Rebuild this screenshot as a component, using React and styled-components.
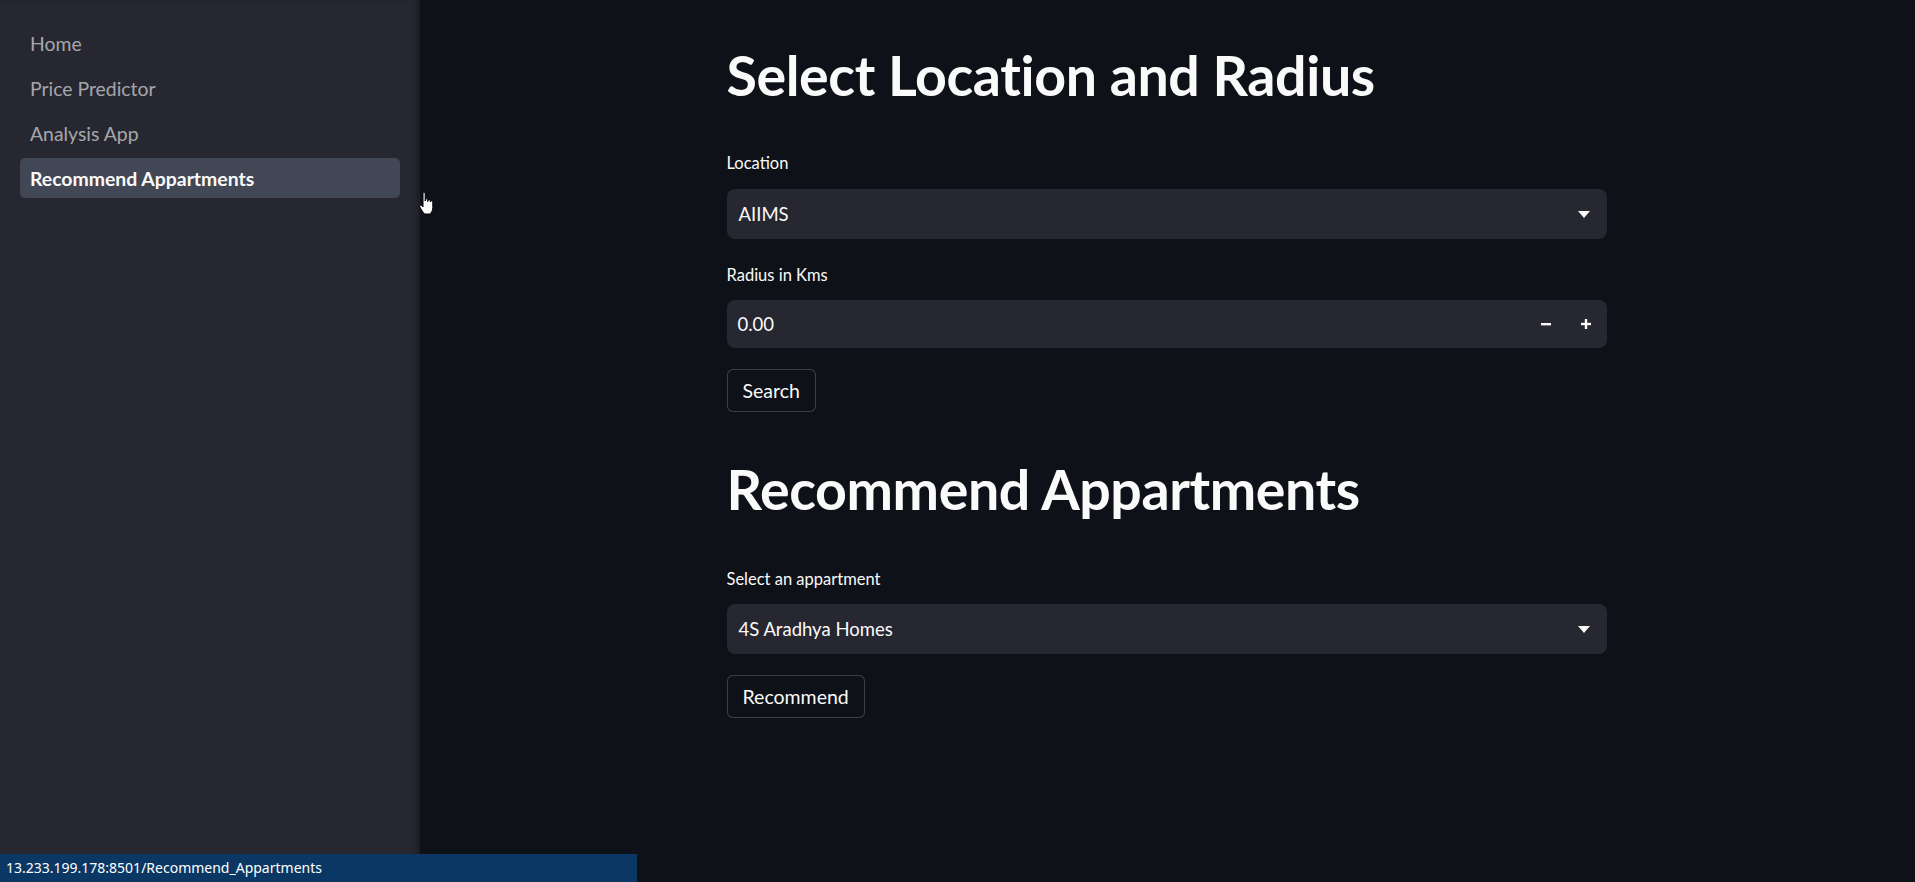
import React from 'react';
import styled, { createGlobalStyle } from 'styled-components';

const GlobalStyle = createGlobalStyle`
  html, body {
    margin: 0;
    padding: 0;
    background: #0e1117;
  }
  body {
    font-family: Lato, "Noto Sans", sans-serif;
    color: #fafafa;
    overflow: hidden;
  }
`;

const Layout = styled.div`
  display: flex;
  height: 882px;
`;

const Sidebar = styled.aside`
  width: 420px;
  flex-shrink: 0;
  box-sizing: border-box;
  background: #262730;
  padding: 23px 20px 0 20px;
  box-shadow: inset -5px 0 6px -3px rgba(0, 0, 0, 0.35);
`;

const NavList = styled.nav`
  display: flex;
  flex-direction: column;
  gap: 5px;
`;

const NavItem = styled.a`
  display: flex;
  align-items: center;
  height: 40px;
  padding: 0 10px;
  border-radius: 5px;
  font-size: 19.4px;
  text-decoration: none;
  color: ${(p) => (p.$active ? '#fafafa' : 'rgba(250, 250, 250, 0.62)')};
  font-weight: ${(p) => (p.$active ? 700 : 400)};
  background: ${(p) => (p.$active ? 'rgba(151, 166, 195, 0.25)' : 'transparent')};
`;

const Main = styled.main`
  flex: 1;
  display: flex;
  justify-content: center;
  padding: 42px 2px 0 0;
`;

const Content = styled.div`
  width: 880px;
  display: flex;
  flex-direction: column;
  align-items: flex-start;
`;

const Title = styled.h1`
  margin: ${(p) => p.$top || 0}px 0 0 0;
  height: 66px;
  line-height: 66px;
  font-size: 55.5px;
  font-weight: 700;
  color: #fafafa;
  letter-spacing: -0.4px;
`;

const Label = styled.label`
  margin-top: ${(p) => p.$top}px;
  height: 22px;
  line-height: 22px;
  font-size: 16.5px;
  color: #fafafa;
`;

const Field = styled.div`
  width: 100%;
  box-sizing: border-box;
  margin-top: ${(p) => p.$top}px;
  height: ${(p) => p.$h}px;
  background: #262730;
  border-radius: 8px;
  display: flex;
  align-items: center;
  justify-content: space-between;
  font-size: 18.5px;
  color: #fafafa;
`;

const SelectField = styled(Field)`
  padding: 0 17px 0 12px;
`;

const NumberField = styled(Field)`
  padding: 0 16px 0 11px;
`;

const Steppers = styled.div`
  display: flex;
  align-items: center;
  gap: 30px;
`;

const Button = styled.button`
  margin-top: 21px;
  height: 43px;
  padding: 0 15px;
  box-sizing: border-box;
  background: #0e1117;
  border: 1px solid rgba(250, 250, 250, 0.2);
  border-radius: 6px;
  color: #fafafa;
  font-family: inherit;
  font-size: 19.5px;
`;

const StatusBar = styled.div`
  position: fixed;
  left: 0;
  bottom: 0;
  width: 637px;
  height: 28px;
  background: #0a3764;
  color: #ffffff;
  font-family: "Noto Sans", "Open Sans", sans-serif;
  font-size: 14px;
  line-height: 28px;
  padding-left: 6px;
  box-sizing: border-box;
`;

const Cursor = styled.svg`
  position: fixed;
  left: 418px;
  top: 191px;
`;

const Caret = () => (
  <svg width="12" height="7" viewBox="0 0 12 7">
    <polygon points="0,0 12,0 6,7" fill="#fafafa" />
  </svg>
);

const Minus = () => (
  <svg width="10" height="10" viewBox="0 0 10 10">
    <rect x="0" y="4" width="10" height="2.4" fill="#fafafa" />
  </svg>
);

const Plus = () => (
  <svg width="10" height="10" viewBox="0 0 10 10">
    <rect x="0" y="3.8" width="10" height="2.4" fill="#fafafa" />
    <rect x="3.8" y="0" width="2.4" height="10" fill="#fafafa" />
  </svg>
);

const pages = ['Home', 'Price Predictor', 'Analysis App', 'Recommend Appartments'];

export default function App() {
  return (
    <>
      <GlobalStyle />
      <Layout>
        <Sidebar>
          <NavList>
            {pages.map((p) => (
              <NavItem key={p} $active={p === 'Recommend Appartments'}>
                {p}
              </NavItem>
            ))}
          </NavList>
        </Sidebar>

        <Main>
          <Content>
            <Title>Select Location and Radius</Title>

            <Label $top={44}>Location</Label>
            <SelectField $top={15} $h={50}>
              <span>AIIMS</span>
              <Caret />
            </SelectField>

            <Label $top={25}>Radius in Kms</Label>
            <NumberField $top={14} $h={48}>
              <span>0.00</span>
              <Steppers>
                <Minus />
                <Plus />
              </Steppers>
            </NumberField>

            <Button>Search</Button>

            <Title $top={44}>Recommend Appartments</Title>

            <Label $top={46}>Select an appartment</Label>
            <SelectField $top={14} $h={50}>
              <span>4S Aradhya Homes</span>
              <Caret />
            </SelectField>

            <Button>Recommend</Button>
          </Content>
        </Main>
      </Layout>

      {/* mouse pointer */}
      <Cursor width="20" height="25" viewBox="0 0 20 25">
        <path
          d="M5 2.5 C5 1.3 7.2 1.3 7.2 2.5 L7.2 10 L7.6 8.6 C7.6 7.5 9.7 7.5 9.7 8.6 L9.8 10.5 L10.2 9.4 C10.3 8.4 12.3 8.4 12.3 9.6 L12.3 11 L12.7 10.4 C12.9 9.5 14.8 9.6 14.8 10.8 L14.8 16.5 C14.8 19.5 13.2 22.5 11.5 23 L6.5 23 C5.2 21.5 3.5 19 1.8 16 C1 14.6 2.6 13.6 3.6 14.5 L5 16 Z"
          fill="#ffffff"
          stroke="#000000"
          strokeWidth="1"
        />
      </Cursor>

      <StatusBar>13.233.199.178:8501/Recommend_Appartments</StatusBar>
    </>
  );
}
